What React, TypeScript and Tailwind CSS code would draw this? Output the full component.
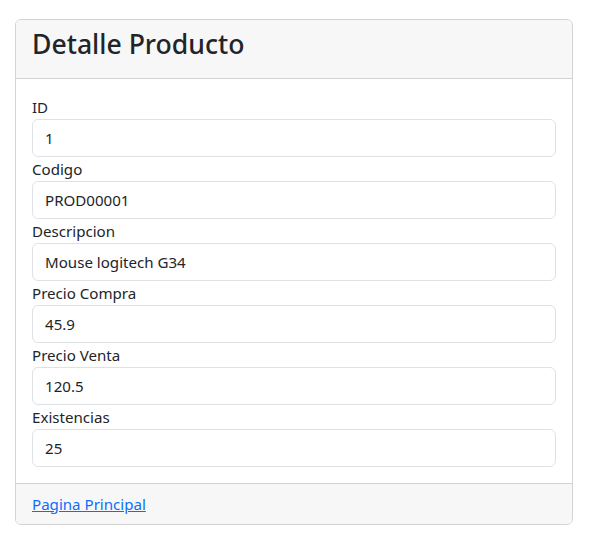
import React from "react";

const fields: [string, string][] = [
  ["ID", "1"],
  ["Codigo", "PROD00001"],
  ["Descripcion", "Mouse logitech G34"],
  ["Precio Compra", "45.9"],
  ["Precio Venta", "120.5"],
  ["Existencias", "25"],
];

export default function App() {
  return (
    <div className="min-h-[546px] bg-white pt-[19px] pl-[15px] text-[#212529]" style={{ fontFamily: '"Noto Sans", "Segoe UI", Roboto, sans-serif' }}>
      <div className="w-[558px] rounded-[6px] border border-[#d3d3d4] overflow-hidden">
        <div className="bg-[#f7f7f7] border-b border-[#d3d3d4] px-4 pt-2 pb-2">
          <h3 className="text-[26.6px] font-medium leading-[33.6px] mb-2">Detalle Producto</h3>
        </div>
        <div className="p-4 bg-white">
          {fields.map(([label, value]) => (
            <div key={label}>
              <div className="text-[15.1px] leading-6">{label}</div>
              <div className="h-[38px] rounded-[6px] border border-[#dee2e6] px-3 flex items-center text-[15.1px] leading-6">
                {value}
              </div>
            </div>
          ))}
        </div>
        <div className="bg-[#f7f7f7] border-t border-[#d3d3d4] px-4 py-2">
          <a href="#" className="text-[#0d6efd] underline text-[15.1px] leading-6">Pagina Principal</a>
        </div>
      </div>
    </div>
  );
}
